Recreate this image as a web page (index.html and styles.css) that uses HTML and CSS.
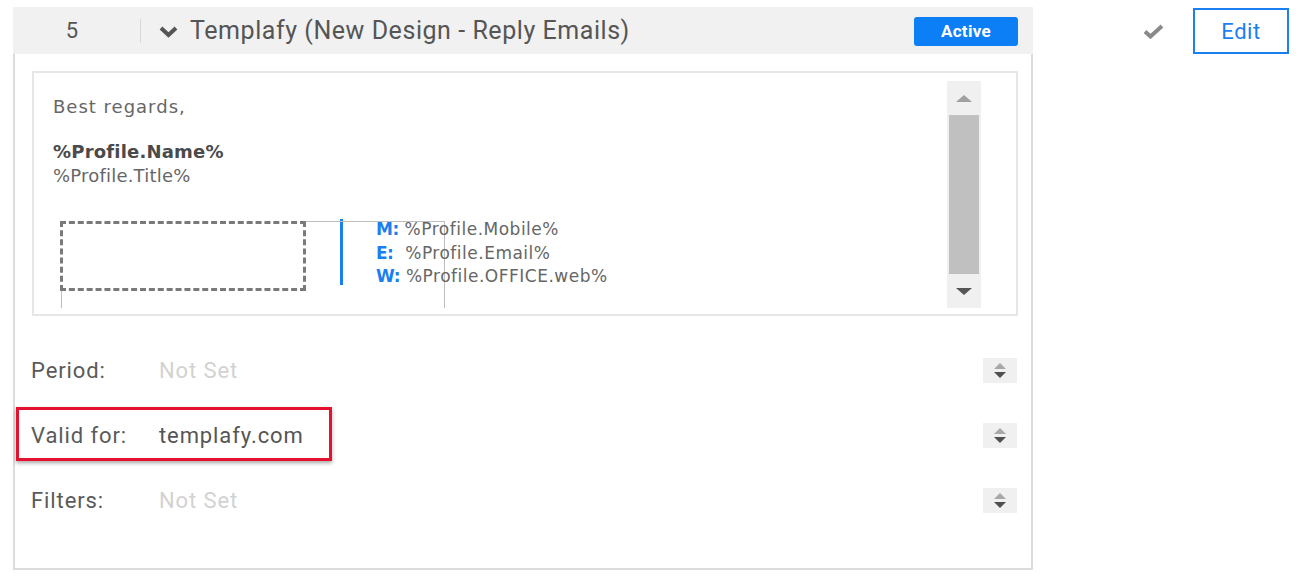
FILE: index.html
```html
<!DOCTYPE html>
<html>
<head>
<meta charset="utf-8">
<link rel="stylesheet" href="styles.css">
</head>
<body>
<div class="page">
  <div class="card">
    <div class="card-head">
      <div class="num">5</div>
      <div class="sep"></div>
      <svg class="chev" width="19" height="12" viewBox="0 0 19 12"><path d="M2 2 L9.5 9 L17 2" fill="none" stroke="#555" stroke-width="4" stroke-linejoin="miter"/></svg>
      <div class="title">Templafy (New Design - Reply Emails)</div>
      <div class="badge">Active</div>
    </div>
    <div class="card-body">
      <div class="preview">
        <div class="preview-content">
          <p class="greet">Best regards,</p>
          <p class="pname">%Profile.Name%</p>
          <p class="ptitle">%Profile.Title%</p>
          <div class="sig">
            <div class="logo-box"></div>
            <div class="blue-bar"></div>
            <div class="contacts">
              <div><b>M:</b> %Profile.Mobile%</div>
              <div><b>E:</b>&nbsp; %Profile.Email%</div>
              <div><b>W:</b> %Profile.OFFICE.web%</div>
            </div>
          </div>
        </div>
        <div class="scrollbar">
          <div class="sb-btn"><span class="tri-up"></span></div>
          <div class="sb-thumb"></div>
          <div class="sb-btn"><span class="tri-down"></span></div>
        </div>
      </div>
      <div class="row">
        <div class="label">Period:</div>
        <div class="value muted">Not Set</div>
        <div class="spin"><span class="s-up"></span><span class="s-down"></span></div>
      </div>
      <div class="row">
        <div class="highlight"></div>
        <div class="label">Valid for:</div>
        <div class="value">templafy.com</div>
        <div class="spin"><span class="s-up"></span><span class="s-down"></span></div>
      </div>
      <div class="row">
        <div class="label">Filters:</div>
        <div class="value muted">Not Set</div>
        <div class="spin"><span class="s-up"></span><span class="s-down"></span></div>
      </div>
    </div>
  </div>
  <div class="actions">
    <svg class="check" width="21" height="15" viewBox="0 0 21 15"><path d="M2 7.5 L7.5 12.5 L19 2" fill="none" stroke="#8a8a8a" stroke-width="4"/></svg>
    <div class="edit">Edit</div>
  </div>
</div>
</body>
</html>
```
FILE: styles.css
```css
html, body {
  margin: 0;
  padding: 0;
  background: #fff;
}
body {
  font-family: Roboto, "Liberation Sans", sans-serif;
  color: #555;
}
.page {
  display: flex;
  align-items: flex-start;
  padding: 7px 0 0 13px;
}
.card {
  width: 1020px;
  display: flex;
  flex-direction: column;
}
.card-head {
  height: 47px;
  background: #f1f1f1;
  display: flex;
  align-items: center;
}
.num {
  width: 118px;
  text-align: center;
  font-size: 22px;
  color: #555;
}
.sep {
  width: 1px;
  height: 24px;
  background: #d8d8d8;
  margin-left: 9px;
}
.chev {
  margin-left: 18px;
  margin-top: 2px;
}
.title {
  margin-left: 12px;
  font-size: 25px;
  letter-spacing: 0.55px;
  color: #555;
  flex: 1;
}
.badge {
  width: 104px;
  height: 29px;
  background: #0c7ef6;
  color: #fff;
  border-radius: 3px;
  font-size: 17px;
  font-weight: 700;
  display: flex;
  align-items: center;
  justify-content: center;
  margin-right: 15px;
  margin-top: 1px;
  letter-spacing: 0.3px;
}
.card-body {
  height: 516px;
  box-sizing: border-box;
  border: 2px solid #dcdcdc;
  border-top: none;
  padding: 17px 13px 0 17px;
}
.preview {
  height: 245px;
  box-sizing: border-box;
  border: 2px solid #e6e6e6;
  display: flex;
}
.preview-content {
  flex: 1;
  height: 235px;
  box-sizing: border-box;
  overflow: hidden;
  padding: 22px 0 0 19px;
  font-family: "DejaVu Sans", sans-serif;
  color: #555;
}
.preview-content p {
  margin: 0;
  font-size: 18px;
  line-height: 24px;
  letter-spacing: 0.2px;
}
.preview-content .greet {
  color: #666;
  letter-spacing: 1px;
  margin-bottom: 21px;
}
.preview-content .pname {
  font-weight: 700;
  color: #4a4a4a;
}
.preview-content .ptitle {
  color: #666;
}
.sig {
  position: relative;
  display: flex;
  align-items: flex-start;
  margin: 33px 0 0 8px;
}
.sig::before {
  content: "";
  position: absolute;
  left: 0;
  top: 0;
  width: 384px;
  height: 120px;
  border: 1px solid #bdbdbd;
  box-sizing: border-box;
}
.logo-box {
  position: relative;
  margin-left: -1px;
  width: 246px;
  height: 70px;
  box-sizing: border-box;
  border: 3px dashed #7a7a7a;
  background: #fff;
}
.blue-bar {
  width: 3px;
  height: 66px;
  margin: -2px 0 0 34px;
  background: #1a7ff0;
}
.contacts {
  position: relative;
  margin: -3px 0 0 33px;
  font-size: 17px;
  line-height: 23.5px;
  color: #666;
  white-space: nowrap;
  letter-spacing: 0.5px;
}
.contacts b {
  color: #1a7ff0;
  letter-spacing: -0.5px;
}
.scrollbar {
  width: 34px;
  margin: 8px 35px 6px 0;
  background: #f0f0f0;
  display: flex;
  flex-direction: column;
  align-items: center;
}
.sb-btn {
  height: 34px;
  width: 34px;
  display: flex;
  align-items: center;
  justify-content: center;
}
.sb-thumb {
  width: 30px;
  flex: 1;
  background: #c0c0c0;
}
.tri-up {
  width: 0;
  height: 0;
  border-left: 8px solid transparent;
  border-right: 8px solid transparent;
  border-bottom: 7px solid #a0a0a0;
}
.tri-down {
  width: 0;
  height: 0;
  border-left: 8px solid transparent;
  border-right: 8px solid transparent;
  border-top: 7px solid #555;
}
.row {
  position: relative;
  height: 65px;
  display: flex;
  align-items: center;
  font-size: 22px;
  letter-spacing: 0.9px;
}
.preview + .row {
  margin-top: 22px;
}
.label {
  width: 128px;
  margin-left: -1px;
  color: #5a5a5a;
}
.value {
  flex: 1;
  color: #555;
}
.value.muted {
  color: #d2d2d2;
}
.spin {
  width: 34px;
  height: 25px;
  background: #f0f0f0;
  margin-right: 1px;
  margin-top: -1px;
  display: flex;
  flex-direction: column;
  align-items: center;
  justify-content: center;
  gap: 3px;
}
.s-up {
  width: 0;
  height: 0;
  border-left: 6px solid transparent;
  border-right: 6px solid transparent;
  border-bottom: 6px solid #a8a8a8;
}
.s-down {
  width: 0;
  height: 0;
  border-left: 6px solid transparent;
  border-right: 6px solid transparent;
  border-top: 6px solid #505050;
}
.highlight {
  position: absolute;
  left: -16px;
  top: 4px;
  width: 316px;
  height: 54px;
  box-sizing: border-box;
  border: 3px solid #e4112f;
  box-shadow: 0 2px 4px rgba(0, 0, 0, 0.35);
}
.actions {
  height: 47px;
  display: flex;
  align-items: center;
  margin-left: 110px;
}
.check {
  margin-top: 2px;
}
.edit {
  margin-left: 29px;
  margin-top: 1px;
  width: 96px;
  height: 46px;
  box-sizing: border-box;
  border: 2px solid #1a7ff0;
  color: #1a7ff0;
  font-size: 22px;
  display: flex;
  align-items: center;
  justify-content: center;
  letter-spacing: 0.5px;
}
```
